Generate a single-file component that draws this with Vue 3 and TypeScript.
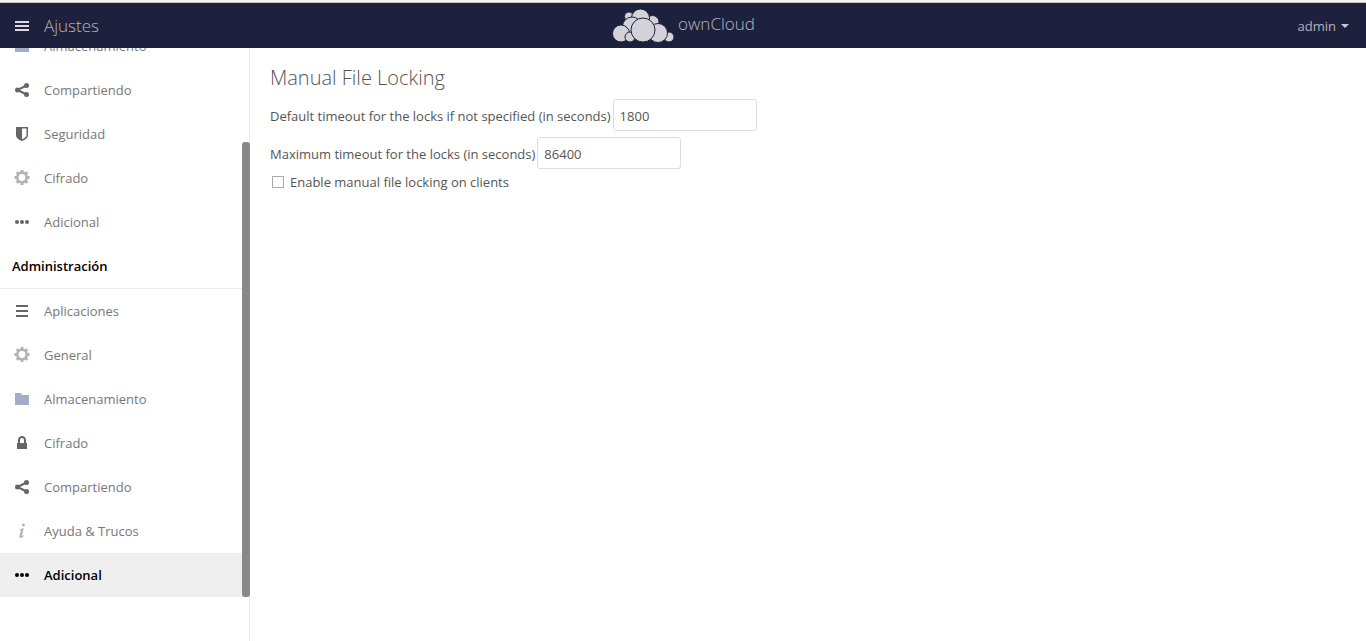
<script setup lang="ts">
import { ref } from 'vue'

type IconName = 'folder' | 'share' | 'shield' | 'gear' | 'more' | 'list' | 'lock' | 'info'

interface NavItem {
  label: string
  icon: IconName
  active?: boolean
}

const personal: NavItem[] = [
  { label: 'Almacenamiento', icon: 'folder' },
  { label: 'Compartiendo', icon: 'share' },
  { label: 'Seguridad', icon: 'shield' },
  { label: 'Cifrado', icon: 'gear' },
  { label: 'Adicional', icon: 'more' },
]

const administration: NavItem[] = [
  { label: 'Aplicaciones', icon: 'list' },
  { label: 'General', icon: 'gear' },
  { label: 'Almacenamiento', icon: 'folder' },
  { label: 'Cifrado', icon: 'lock' },
  { label: 'Compartiendo', icon: 'share' },
  { label: 'Ayuda & Trucos', icon: 'info' },
  { label: 'Adicional', icon: 'more', active: true },
]

const groups = [
  { title: '', items: personal },
  { title: 'Administración', items: administration },
]

const defaultTimeout = ref('1800')
const maxTimeout = ref('86400')
const lockingEnabled = ref(false)

const teeth = [0, 45, 90, 135, 180, 225, 270, 315]
</script>

<template>
  <div class="app">
    <header class="topbar">
      <button class="menu" type="button">
        <svg class="menu-icon" width="16" height="16" viewBox="0 0 16 16" aria-hidden="true">
          <path d="M1 3h14v2H1zM1 7h14v2H1zM1 11h14v2H1z" />
        </svg>
        <span>Ajustes</span>
      </button>
      <a class="brand" href="#">
        <svg width="62" height="34" viewBox="0 0 62 34" aria-hidden="true">
          <g class="cloud">
            <circle cx="17" cy="7.500" r="4.500" />
            <circle cx="40.500" cy="13" r="6.500" />
            <circle cx="28.500" cy="9" r="9" />
            <circle cx="20" cy="17.500" r="9.500" />
            <circle cx="9" cy="24.500" r="8.500" />
            <circle cx="18" cy="28" r="5" />
            <circle cx="57" cy="28" r="5" />
            <circle cx="46" cy="24" r="9.500" />
            <circle cx="31" cy="21" r="12" />
          </g>
        </svg>
        <span>ownCloud</span>
      </a>
      <button class="user" type="button">
        <span>admin</span>
        <svg width="8" height="4" viewBox="0 0 8 4" aria-hidden="true"><path d="M0 0h8L4 4z" /></svg>
      </button>
    </header>

    <div class="body">
      <aside class="sidebar">
        <nav class="nav">
          <section v-for="group in groups" :key="group.title" class="group">
            <h2 v-if="group.title" class="group-title">{{ group.title }}</h2>
            <ul>
              <li v-for="item in group.items" :key="item.label">
                <a href="#" class="link" :class="{ active: item.active }">
                  <svg class="icon" :class="item.icon" width="16" height="16" viewBox="0 0 16 16" aria-hidden="true">
                    <path v-if="item.icon === 'folder'" d="M1 2h6l1 2h7v10H1z" />
                    <g v-else-if="item.icon === 'share'">
                      <path d="M12.500 3.500L3.500 8l9 4.500" fill="none" stroke="currentColor" stroke-width="2" />
                      <circle cx="12.500" cy="3.500" r="2.500" />
                      <circle cx="3.500" cy="8" r="2.500" />
                      <circle cx="12.500" cy="12.500" r="2.500" />
                    </g>
                    <path
                      v-else-if="item.icon === 'shield'"
                      fill-rule="evenodd"
                      d="M2 1h12v8c0 3-3 5-6 6-3-1-6-3-6-6zM8 2.500v10.800c2-.8 4.500-2.300 4.500-4.300V2.500z"
                    />
                    <g v-else-if="item.icon === 'gear'">
                      <circle cx="8" cy="7.500" r="4.700" fill="none" stroke="currentColor" stroke-width="2.600" />
                      <rect
                        v-for="angle in teeth"
                        :key="angle"
                        x="6.500"
                        y="0"
                        width="3"
                        height="3"
                        rx="0.500"
                        :transform="`rotate(${angle} 8 7.5)`"
                      />
                    </g>
                    <g v-else-if="item.icon === 'more'">
                      <circle cx="3" cy="8" r="2" />
                      <circle cx="8" cy="8" r="2" />
                      <circle cx="13" cy="8" r="2" />
                    </g>
                    <path v-else-if="item.icon === 'list'" d="M2 2h12v2H2zM2 7h12v2H2zM2 12h12v2H2z" />
                    <path
                      v-else-if="item.icon === 'lock'"
                      fill-rule="evenodd"
                      d="M8 1C5.500 1 4 3 4 5v3H3v6h10V8h-1V5c0-2-1.500-4-4-4zm0 2c1.300 0 2 1 2 2v3H6V5c0-1 .7-2 2-2z"
                    />
                    <g v-else>
                      <circle cx="9.500" cy="2" r="1.400" />
                      <path d="M5.500 6.500L9.800 5 8 12.300c-.2.900.300 1 1.800-.3l.3.600C8.500 14.500 7 15.300 6 14.800c-.8-.4-.7-1.300-.4-2.300L7 7.200l-1.500.1z" />
                    </g>
                  </svg>
                  <span>{{ item.label }}</span>
                </a>
              </li>
            </ul>
          </section>
        </nav>
        <div class="scroll-thumb"></div>
      </aside>

      <main class="content">
        <h1>Manual File Locking</h1>
        <form @submit.prevent>
          <div class="field">
            <label for="default-timeout">Default timeout for the locks if not specified (in seconds)</label>
            <input id="default-timeout" v-model="defaultTimeout" type="text" />
          </div>
          <div class="field">
            <label for="max-timeout">Maximum timeout for the locks (in seconds)</label>
            <input id="max-timeout" v-model="maxTimeout" type="text" />
          </div>
          <div class="check">
            <input id="enable-locking" v-model="lockingEnabled" type="checkbox" />
            <label for="enable-locking">Enable manual file locking on clients</label>
          </div>
        </form>
      </main>
    </div>
  </div>
</template>

<style>
body {
  margin: 0;
  background: #fff;
}
</style>

<style scoped>
.app {
  display: flex;
  flex-direction: column;
  height: 100vh;
  box-sizing: border-box;
  border-top: 2px solid #f6f4f2;
  font-family: "Open Sans", "Liberation Sans", sans-serif;
  font-size: 13px;
  line-height: 20px;
  color: #555;
}

button {
  padding: 0;
  border: 0;
  background: none;
  font: inherit;
  color: inherit;
  cursor: pointer;
}

a {
  color: inherit;
  text-decoration: none;
}

.topbar {
  display: grid;
  grid-template-columns: 1fr auto 1fr;
  align-items: center;
  flex: none;
  height: 46px;
  box-sizing: border-box;
  border-top: 1px solid #c9c3c0;
  padding: 0 17px 0 14px;
  background: #1e213e;
  color: #b4b5be;
}

.menu {
  display: flex;
  align-items: center;
  justify-self: start;
  gap: 14px;
  font-size: 17px;
  font-weight: 300;
  line-height: 24px;
}

.menu-icon {
  fill: #dbd9df;
}

.brand {
  display: flex;
  align-items: center;
  gap: 4px;
  padding-left: 4px;
  font-size: 17px;
  font-weight: 300;
  line-height: 24px;
}

.brand span {
  padding-bottom: 4px;
}

.cloud {
  fill: #d3d2d9;
  stroke: #1e213e;
  stroke-width: 1;
}

.user {
  display: flex;
  align-items: center;
  justify-self: end;
  gap: 5px;
}

.user svg {
  fill: #c8c8ce;
}

.body {
  display: flex;
  flex: 1;
  min-height: 0;
}

.sidebar {
  position: relative;
  display: flex;
  flex-direction: column;
  justify-content: flex-end;
  flex: none;
  width: 250px;
  box-shadow: inset -1px 0 #ebebeb;
  overflow: hidden;
}

.nav {
  flex: none;
  padding-bottom: 44px;
}

ul {
  margin: 0;
  padding: 0;
  list-style: none;
}

.group-title {
  margin: 0;
  padding: 0 12px;
  border-bottom: 1px solid #ebebeb;
  font-size: 13px;
  font-weight: 600;
  line-height: 44px;
  color: #000;
}

.link {
  display: flex;
  align-items: center;
  gap: 14px;
  height: 44px;
  padding: 0 14px;
  color: #777;
}

.link.active {
  background: #efefef;
  font-weight: 600;
  color: #000;
}

.icon {
  color: #666;
  fill: currentColor;
}

.icon.folder {
  color: #a2aec8;
}

.icon.gear,
.icon.info {
  color: #b3b3b3;
}

.active .icon {
  color: #000;
}

.scroll-thumb {
  position: absolute;
  top: 94px;
  right: 0;
  bottom: 44px;
  width: 8px;
  border-radius: 3px;
  background: #888;
}

.content {
  flex: 1;
  padding: 16px 20px;
}

h1 {
  margin: 0 0 8px;
  font-size: 20px;
  font-weight: 300;
  line-height: 27px;
}

.field {
  display: flex;
  align-items: center;
  gap: 2px;
  margin-bottom: 6px;
}

.field input {
  width: 144px;
  height: 32px;
  box-sizing: border-box;
  padding: 2px 6px 0;
  border: 1px solid #ddd;
  border-radius: 3px;
  background: #fff;
  font: inherit;
  color: #555;
}

.field label {
  padding-top: 2px;
}

.check {
  display: flex;
  align-items: center;
  gap: 6px;
  padding-left: 2px;
  line-height: 14px;
}

.check input {
  width: 12px;
  height: 12px;
  margin: 0;
  box-sizing: border-box;
  appearance: none;
  border: 1px solid #aaa;
  background: #fff;
}

.check input:checked {
  background: #555;
}
</style>
